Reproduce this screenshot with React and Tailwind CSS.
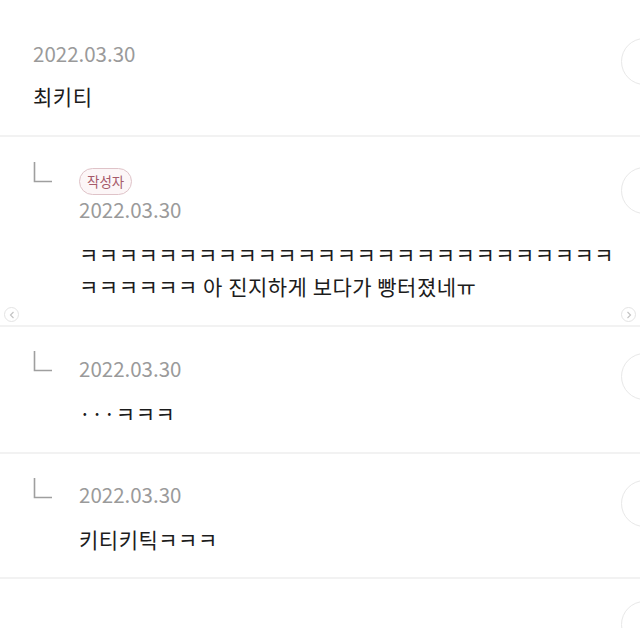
function ReplyMark() {
  return (
    <svg width="20" height="21" viewBox="0 0 20 21" className="block">
      <path d="M1.5 0 V19.5 H19" fill="none" stroke="#9f9f9f" strokeWidth="1.6" />
    </svg>
  );
}

function MoreCircle({ className }) {
  return (
    <div className={"shrink-0 w-[47px] h-[47px] rounded-full border-[1.5px] border-[#e8e8e8] -mr-[28px] " + className} />
  );
}

function Divider() {
  return <div className="h-[2px] bg-[#f2f2f2]" />;
}

function Date() {
  return <div className="h-[28px] leading-[28px] text-[20.5px] text-[#9a9a9a]">2022.03.30</div>;
}

function Body({ children, className = "mt-[15px]" }) {
  return <div className={"text-[21px] tracking-[0.5px] leading-[32px] text-[#1c1c1c] " + className}>{children}</div>;
}

export default function App() {
  return (
    <div className="relative w-[640px] h-[628px] overflow-hidden bg-white font-['Noto_Sans_CJK_KR','Noto_Sans',sans-serif]">
      {/* top comment */}
      <div className="flex items-start pl-[33px] pt-[38px] pb-[23px]">
        <div className="flex-1 mt-[1px]">
          <Date />
          <Body className="mt-[13px]">최키티</Body>
        </div>
        <MoreCircle />
      </div>
      <Divider />

      {/* writer reply */}
      <div className="flex items-start pl-[33px] pt-[24px] pb-[23px]">
        <div className="w-[46px] shrink-0 mt-[1px]">
          <ReplyMark />
        </div>
        <div className="flex-1 mt-[7px]">
          <span className="inline-flex items-center h-[27px] px-[7px] rounded-full border-[1.5px] border-[#dfc3c8] bg-[#fcf6f7] text-[13.5px] text-[#a65a6a]">
            작성자
          </span>
          <Date />
          <Body>
            ㅋㅋㅋㅋㅋㅋㅋㅋㅋㅋㅋㅋㅋㅋㅋㅋㅋㅋㅋㅋㅋㅋㅋㅋㅋㅋㅋ
            <br />
            ㅋㅋㅋㅋㅋㅋ 아 진지하게 보다가 빵터졌네ㅠ
          </Body>
        </div>
        <MoreCircle className="mt-[6px]" />
      </div>
      <Divider />

      {/* reply */}
      <div className="flex items-start pl-[33px] pt-[24px] pb-[23px]">
        <div className="w-[46px] shrink-0">
          <ReplyMark />
        </div>
        <div className="flex-1 mt-[3px]">
          <Date />
          <Body>···ㅋㅋㅋ</Body>
        </div>
        <MoreCircle className="mt-[2px]" />
      </div>
      <Divider />

      {/* reply */}
      <div className="flex items-start pl-[33px] pt-[24px] pb-[22px]">
        <div className="w-[46px] shrink-0">
          <ReplyMark />
        </div>
        <div className="flex-1 mt-[2px]">
          <Date />
          <Body>키티키틱ㅋㅋㅋ</Body>
        </div>
        <MoreCircle className="mt-[2px]" />
      </div>
      <Divider />

      <div className="flex justify-end pt-[22px]">
        <MoreCircle />
      </div>

      {/* carousel arrows */}
      <div className="absolute left-[4px] top-[307px] w-[15px] h-[15px] rounded-full border border-[#e4e4e4] bg-white flex items-center justify-center">
        <svg width="6" height="8" viewBox="0 0 6 8">
          <path d="M4.5 1 L1.5 4 L4.5 7" fill="none" stroke="#c4c4c4" strokeWidth="1.2" />
        </svg>
      </div>
      <div className="absolute left-[621px] top-[307px] w-[15px] h-[15px] rounded-full border border-[#e4e4e4] bg-white flex items-center justify-center">
        <svg width="6" height="8" viewBox="0 0 6 8">
          <path d="M1.5 1 L4.5 4 L1.5 7" fill="none" stroke="#c4c4c4" strokeWidth="1.2" />
        </svg>
      </div>
    </div>
  );
}
